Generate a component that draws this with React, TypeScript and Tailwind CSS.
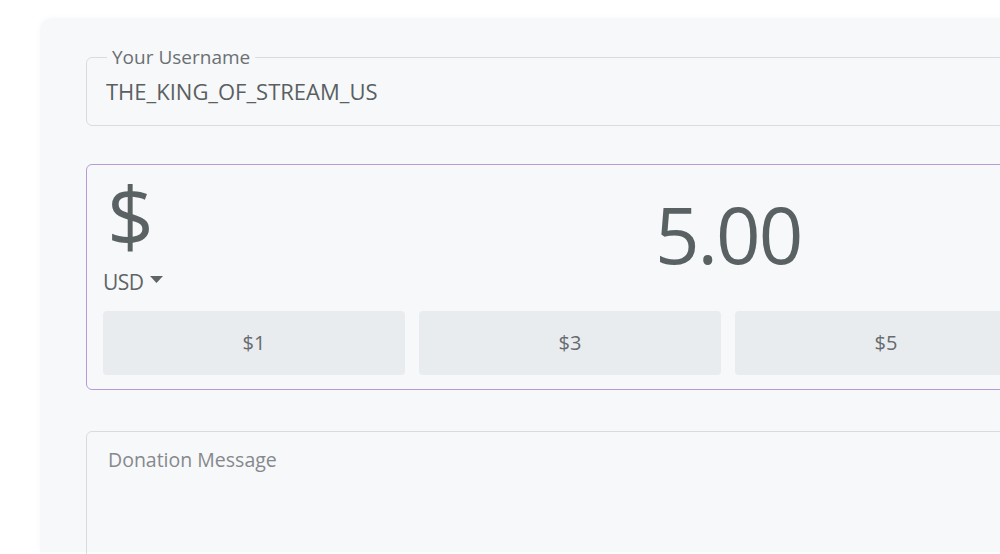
import { useState } from 'react';

const presets = [1, 3, 5];

export default function App() {
  const [username, setUsername] = useState('THE_KING_OF_STREAM_US');
  const [amount, setAmount] = useState('5.00');
  const [message, setMessage] = useState('');

  return (
    <div
      className="h-[554px] w-[1000px] overflow-hidden bg-white"
      style={{ fontFamily: '"Open Sans", "Noto Sans", sans-serif' }}
    >
      <div className="ml-[40px] mt-[18px] h-[534px] w-[1100px] rounded-tl-[12px] bg-[#f7f8fa] pl-[46px] pt-[28px] shadow-[0_0_6px_rgba(0,0,0,0.03)]">
        <div className="w-[968px]">
          <fieldset className="h-[80px] rounded-[6px] border border-[#d9dcdf] px-[19px]">
            <legend className="ml-[1px] px-[5px] text-[19px] leading-[22px] text-[#6b7073]">Your Username</legend>
            <input
              value={username}
              onChange={(e) => setUsername(e.target.value)}
              className="mt-[8px] w-full bg-transparent text-[22px] leading-[30px] text-[#5a5f62] outline-none"
            />
          </fieldset>

          <div className="mt-[38px] h-[226px] rounded-[6px] border border-[#b99ad9] px-[16px] pt-[14px]">
            <div className="flex h-[130px]">
              <div className="flex w-[120px] flex-col">
                <span className="-mt-[4px] ml-[4px] text-[82px] leading-[80px] text-[#5b6264]">$</span>
                <button className="mt-[15px] flex items-center gap-[6px] text-[21px] leading-[24px] tracking-[-0.5px] text-[#5f6467]">
                  USD
                  <svg width="13" height="7" viewBox="0 0 13 7" className="-mt-[6px]">
                    <path d="M0 0h13L6.5 7z" fill="#5f6467" />
                  </svg>
                </button>
              </div>
              <input
                value={amount}
                onChange={(e) => setAmount(e.target.value)}
                className="mt-[10px] h-[90px] min-w-0 flex-1 bg-transparent pl-[432px] text-left text-[78px] leading-[90px] tracking-[-2px] text-[#5a6163] outline-none"
              />
            </div>
            <div className="mt-[2px] flex gap-[14px]">
              {presets.map((p) => (
                <button
                  key={p}
                  onClick={() => setAmount(p.toFixed(2))}
                  className="h-[64px] flex-1 rounded-[4px] bg-[#e9ecee] text-[20px] text-[#656b6e]"
                >
                  ${p}
                </button>
              ))}
            </div>
          </div>

          <textarea
            value={message}
            onChange={(e) => setMessage(e.target.value)}
            placeholder="Donation Message"
            className="mt-[41px] h-[160px] w-full resize-none rounded-[6px] border border-[#d9dcdf] bg-transparent px-[21px] py-[13px] text-[19.5px] text-[#5a5f62] outline-none placeholder:text-[#85898c]"
          />
        </div>
      </div>
    </div>
  );
}
